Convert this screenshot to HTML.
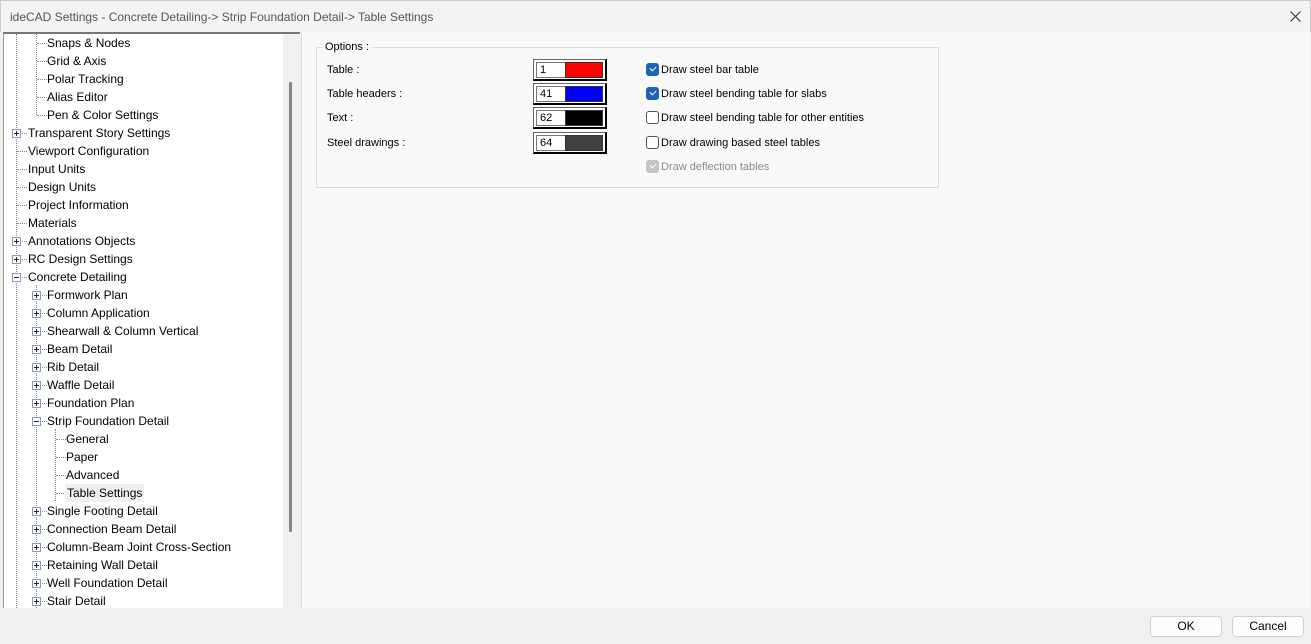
<!DOCTYPE html><html><head><style>
*{margin:0;padding:0;box-sizing:border-box}
body{width:1311px;height:644px;background:#f0f0f0;font-family:"Liberation Sans",sans-serif;font-size:12px;color:#000;position:relative;overflow:hidden}
.abs{position:absolute}
.title{left:0;top:0;width:1311px;height:32px;background:#f3f3f3;border:1px solid #ccc;border-bottom:none}
.title span{position:absolute;left:9px;top:9px;color:#555;font-size:12px}
.tree{left:3px;top:32px;width:297px;height:576px;background:#fff;border-top:2px solid #777;border-left:1px solid #999;overflow:hidden}
.r{position:absolute;height:18px;line-height:18px;white-space:nowrap}
.vl{position:absolute;border-left:1px dotted #888;width:0}
.hl{position:absolute;border-top:1px dotted #888;height:0}
.bx{position:absolute;width:9px;height:9px;border:1px solid #8a9bb5;background:#fff;font-size:0}
.bx:before{content:"";position:absolute;left:1px;top:3px;width:5px;height:1px;background:#223}
.bx.p:after{content:"";position:absolute;left:3px;top:1px;width:1px;height:5px;background:#223}
.right{left:301px;top:32px;width:1009px;height:576px;background:#f9f9f9;border-left:1px solid #ddd}
.f11{font-size:11px}
.cs{position:absolute;left:533px;width:74px;height:22px;border:1px solid #666;border-right:2px solid #000;border-bottom:2px solid #000;background:#fff}
.cs i{position:absolute;left:2px;top:2px;width:30px;height:16px;border:1px solid #777;font-style:normal;padding-left:3px;line-height:14px;font-size:11px}
.cs b{position:absolute;left:31px;top:2px;width:38px;height:16px;border:1px solid #333}
.cb{position:absolute;left:646px;width:13px;height:13px;border:1px solid #555;border-radius:3px;background:#fff}
.cb.on{background:#1f62b8;border-color:#1f62b8}
.cb.on:after,.cb.dis:after{content:"";position:absolute;left:3px;top:2px;width:5px;height:3px;border-left:1.3px solid #fff;border-bottom:1.3px solid #fff;transform:rotate(-45deg)}
.cb.dis{background:#c4c4c4;border-color:#c4c4c4}
.btn{position:absolute;top:616px;width:72px;height:21px;border:1px solid #d0d0d0;border-radius:4px;background:#fdfdfd;text-align:center;line-height:19px}
</style></head><body>
<div class="abs title"><span>ideCAD Settings - Concrete Detailing-&gt; Strip Foundation Detail-&gt; Table Settings</span>
<svg style="position:absolute;left:1289px;top:10px" width="11" height="11"><path d="M0.5 0.5L10.5 10.5M10.5 0.5L0.5 10.5" stroke="#333" stroke-width="1.1"/></svg></div>
<div class="abs tree">
<div class="vl" style="left:12px;top:0;height:576px"></div>
<div class="vl" style="left:32px;top:0;height:81px"></div>
<div class="vl" style="left:32px;top:251px;height:325px"></div>
<div class="vl" style="left:51px;top:395px;height:72px"></div>
<div class="hl" style="left:33px;top:9px;width:10px"></div><div class="r" style="left:43px;top:0">Snaps &amp; Nodes</div>
<div class="hl" style="left:33px;top:27px;width:10px"></div><div class="r" style="left:43px;top:18px">Grid &amp; Axis</div>
<div class="hl" style="left:33px;top:45px;width:10px"></div><div class="r" style="left:43px;top:36px">Polar Tracking</div>
<div class="hl" style="left:33px;top:63px;width:10px"></div><div class="r" style="left:43px;top:54px">Alias Editor</div>
<div class="hl" style="left:33px;top:81px;width:10px"></div><div class="r" style="left:43px;top:72px">Pen &amp; Color Settings</div>
<div class="hl" style="left:13px;top:99px;width:10px"></div><div class="bx p" style="left:8px;top:95px"></div><div class="r" style="left:24px;top:90px">Transparent Story Settings</div>
<div class="hl" style="left:13px;top:117px;width:10px"></div><div class="r" style="left:24px;top:108px">Viewport Configuration</div>
<div class="hl" style="left:13px;top:135px;width:10px"></div><div class="r" style="left:24px;top:126px">Input Units</div>
<div class="hl" style="left:13px;top:153px;width:10px"></div><div class="r" style="left:24px;top:144px">Design Units</div>
<div class="hl" style="left:13px;top:171px;width:10px"></div><div class="r" style="left:24px;top:162px">Project Information</div>
<div class="hl" style="left:13px;top:189px;width:10px"></div><div class="r" style="left:24px;top:180px">Materials</div>
<div class="hl" style="left:13px;top:207px;width:10px"></div><div class="bx p" style="left:8px;top:203px"></div><div class="r" style="left:24px;top:198px">Annotations Objects</div>
<div class="hl" style="left:13px;top:225px;width:10px"></div><div class="bx p" style="left:8px;top:221px"></div><div class="r" style="left:24px;top:216px">RC Design Settings</div>
<div class="hl" style="left:13px;top:243px;width:10px"></div><div class="bx" style="left:8px;top:239px"></div><div class="r" style="left:24px;top:234px">Concrete Detailing</div>
<div class="hl" style="left:33px;top:261px;width:10px"></div><div class="bx p" style="left:28px;top:257px"></div><div class="r" style="left:43px;top:252px">Formwork Plan</div>
<div class="hl" style="left:33px;top:279px;width:10px"></div><div class="bx p" style="left:28px;top:275px"></div><div class="r" style="left:43px;top:270px">Column Application</div>
<div class="hl" style="left:33px;top:297px;width:10px"></div><div class="bx p" style="left:28px;top:293px"></div><div class="r" style="left:43px;top:288px">Shearwall &amp; Column Vertical</div>
<div class="hl" style="left:33px;top:315px;width:10px"></div><div class="bx p" style="left:28px;top:311px"></div><div class="r" style="left:43px;top:306px">Beam Detail</div>
<div class="hl" style="left:33px;top:333px;width:10px"></div><div class="bx p" style="left:28px;top:329px"></div><div class="r" style="left:43px;top:324px">Rib Detail</div>
<div class="hl" style="left:33px;top:351px;width:10px"></div><div class="bx p" style="left:28px;top:347px"></div><div class="r" style="left:43px;top:342px">Waffle Detail</div>
<div class="hl" style="left:33px;top:369px;width:10px"></div><div class="bx p" style="left:28px;top:365px"></div><div class="r" style="left:43px;top:360px">Foundation Plan</div>
<div class="hl" style="left:33px;top:387px;width:10px"></div><div class="bx" style="left:28px;top:383px"></div><div class="r" style="left:43px;top:378px">Strip Foundation Detail</div>
<div class="hl" style="left:52px;top:405px;width:10px"></div><div class="r" style="left:62px;top:396px">General</div>
<div class="hl" style="left:52px;top:423px;width:10px"></div><div class="r" style="left:62px;top:414px">Paper</div>
<div class="hl" style="left:52px;top:441px;width:10px"></div><div class="r" style="left:62px;top:432px">Advanced</div>
<div class="hl" style="left:52px;top:459px;width:10px"></div><div class="r" style="left:61px;top:450px;background:#f0f0f0;padding:0 2px">Table Settings</div>
<div class="hl" style="left:33px;top:477px;width:10px"></div><div class="bx p" style="left:28px;top:473px"></div><div class="r" style="left:43px;top:468px">Single Footing Detail</div>
<div class="hl" style="left:33px;top:495px;width:10px"></div><div class="bx p" style="left:28px;top:491px"></div><div class="r" style="left:43px;top:486px">Connection Beam Detail</div>
<div class="hl" style="left:33px;top:513px;width:10px"></div><div class="bx p" style="left:28px;top:509px"></div><div class="r" style="left:43px;top:504px">Column-Beam Joint Cross-Section</div>
<div class="hl" style="left:33px;top:531px;width:10px"></div><div class="bx p" style="left:28px;top:527px"></div><div class="r" style="left:43px;top:522px">Retaining Wall Detail</div>
<div class="hl" style="left:33px;top:549px;width:10px"></div><div class="bx p" style="left:28px;top:545px"></div><div class="r" style="left:43px;top:540px">Well Foundation Detail</div>
<div class="hl" style="left:33px;top:567px;width:10px"></div><div class="bx p" style="left:28px;top:563px"></div><div class="r" style="left:43px;top:558px">Stair Detail</div>
<div style="position:absolute;left:279px;top:0;width:17px;height:576px;background:#f0f0f0"></div>
<div style="position:absolute;left:285px;top:48px;width:3px;height:450px;background:#858585;border-radius:1px"></div>
</div>
<div class="abs right"></div>
<div class="abs" style="left:316px;top:47px;width:623px;height:141px;border:1px solid #dcdcdc"></div>
<div class="abs f11" style="left:322px;top:41px;background:#f9f9f9;padding:0 3px">Options :</div>
<div class="abs f11" style="left:327px;top:64px">Table :</div>
<div class="abs f11" style="left:327px;top:88px">Table headers :</div>
<div class="abs f11" style="left:327px;top:112px">Text :</div>
<div class="abs f11" style="left:327px;top:137px">Steel drawings :</div>
<div class="cs" style="top:59px"><i>1</i><b style="background:#f00"></b></div>
<div class="cs" style="top:83px"><i>41</i><b style="background:#00f"></b></div>
<div class="cs" style="top:107px"><i>62</i><b style="background:#000"></b></div>
<div class="cs" style="top:132px"><i>64</i><b style="background:#404040"></b></div>
<div class="cb on" style="top:63px"></div><div class="abs f11" style="left:661px;top:64px">Draw steel bar table</div>
<div class="cb on" style="top:87px"></div><div class="abs f11" style="left:661px;top:88px">Draw steel bending table for slabs</div>
<div class="cb" style="top:111px"></div><div class="abs f11" style="left:661px;top:112px">Draw steel bending table for other entities</div>
<div class="cb" style="top:136px"></div><div class="abs f11" style="left:661px;top:137px">Draw drawing based steel tables</div>
<div class="cb dis" style="top:160px"></div><div class="abs f11" style="left:661px;top:161px;color:#8a8a8a">Draw deflection tables</div>
<div class="btn" style="left:1150px">OK</div>
<div class="btn" style="left:1232px">Cancel</div>
</body></html>
